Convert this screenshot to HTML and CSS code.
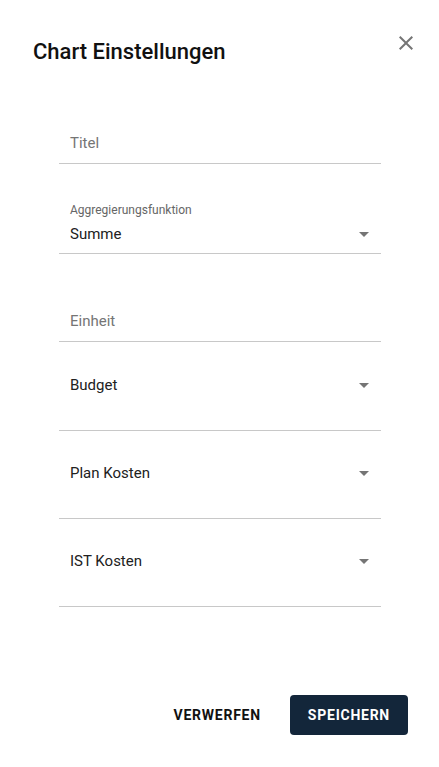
FILE: index.html
```html
<!DOCTYPE html>
<html lang="de">
<head>
  <meta charset="UTF-8">
  <title>Chart Einstellungen</title>
  <link rel="stylesheet" href="styles.css">
</head>
<body>

  <div class="dialog">
    <!-- Kopfzeile -->
    <div class="dialog_head">
      <h2 class="dialog_title">Chart Einstellungen</h2>
      <button class="close" aria-label="Schließen">
        <svg width="24" height="24" viewBox="0 0 24 24">
          <path d="M19 6.41L17.59 5 12 10.59 6.41 5 5 6.41 10.59 12 5 17.59 6.41 19 12 13.41 17.59 19 19 17.59 13.41 12z"/>
        </svg>
      </button>
    </div>

    <!-- Formular -->
    <div class="form">
      <div class="field field_input">
        <span class="placeholder">Titel</span>
      </div>

      <div class="field field_labeled">
        <span class="label">Aggregierungsfunktion</span>
        <div class="select_row">
          <span class="value">Summe</span>
          <span class="arrow"></span>
        </div>
      </div>

      <div class="field field_input field_unit">
        <span class="placeholder">Einheit</span>
      </div>

      <div class="field field_select">
        <div class="select_row">
          <span class="value">Budget</span>
          <span class="arrow"></span>
        </div>
      </div>

      <div class="field field_select">
        <div class="select_row">
          <span class="value">Plan Kosten</span>
          <span class="arrow"></span>
        </div>
      </div>

      <div class="field field_select">
        <div class="select_row">
          <span class="value">IST Kosten</span>
          <span class="arrow"></span>
        </div>
      </div>
    </div>

    <!-- Aktionen -->
    <div class="actions">
      <button class="but but_text">Verwerfen</button>
      <button class="but but_primary">Speichern</button>
    </div>
  </div>

</body>
</html>
```

FILE: styles.css
```css
:root {
  --navy: #13263a;
  --linie: #c8c8c8;
  --grau: #757575;
  --text: #212121;
}

* {
  box-sizing: border-box;
}

body {
  margin: 0;
  background: #fff;
  font-family: Roboto, "Liberation Sans", sans-serif;
  color: var(--text);
}

.dialog {
  display: flex;
  flex-direction: column;
  min-height: 767px;
  padding-top: 38px;
}

.dialog_head {
  display: flex;
  justify-content: space-between;
  align-items: flex-start;
  padding: 0 21px 0 33px;
}

.dialog_title {
  margin: 0;
  font-size: 22px;
  line-height: 28px;
  font-weight: 500;
  color: #111;
}

.close {
  border: none;
  background: none;
  padding: 0;
  margin-top: -7px;
  cursor: pointer;
  fill: var(--grau);
  display: flex;
}

.form {
  margin: 67px 58px 0 59px;
  display: flex;
  flex-direction: column;
}

.field {
  border-bottom: 1px solid var(--linie);
  padding: 0 12px 10px 11px;
  font-size: 15px;
  line-height: 20px;
}

.placeholder {
  color: var(--grau);
}

.field_labeled {
  margin-top: 38px;
  padding-bottom: 9px;
}

.label {
  display: block;
  font-size: 12px;
  line-height: 16px;
  color: #666;
  margin-bottom: 6px;
}

.field_unit {
  margin-top: 57px;
}

.field_select {
  margin-top: 32px;
  padding-bottom: 35px;
}

.field_unit + .field_select {
  margin-top: 33px;
}

.select_row {
  display: flex;
  justify-content: space-between;
  align-items: center;
}

.arrow {
  width: 0;
  height: 0;
  border-left: 5px solid transparent;
  border-right: 5px solid transparent;
  border-top: 5px solid var(--grau);
}

.actions {
  margin-top: auto;
  display: flex;
  justify-content: flex-end;
  gap: 13px;
  padding: 0 31px 32px 0;
}

.but {
  height: 40px;
  border: none;
  border-radius: 4px;
  font-family: Roboto, "Liberation Sans", sans-serif;
  font-size: 14px;
  font-weight: 700;
  letter-spacing: 0.75px;
  text-transform: uppercase;
  cursor: pointer;
}

.but_text {
  background: none;
  color: #111;
  padding: 0 16px;
}

.but_primary {
  background: var(--navy);
  color: #fff;
  padding: 0 18px;
}
```
